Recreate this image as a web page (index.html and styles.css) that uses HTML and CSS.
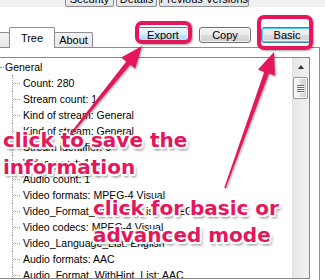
FILE: index.html
```html
<!DOCTYPE html>
<html>
<head>
<meta charset="utf-8">
<link rel="stylesheet" href="styles.css">
</head>
<body>
<div class="screen">
  <div class="parent-tabs">
    <div class="ptab ptab-security">Security</div>
    <div class="ptab ptab-details">Details</div>
    <div class="ptab ptab-prev">Previous Versions</div>
  </div>

  <div class="head">
    <div class="tabs">
      <div class="tab tab-stub"></div>
      <div class="tab tab-tree active">Tree</div>
      <div class="tab tab-about">About</div>
    </div>
    <div class="buttons">
      <button class="btn btn-hover">Export</button>
      <button class="btn">Copy</button>
      <button class="btn btn-default">Basic</button>
    </div>
  </div>

  <div class="page">
    <div class="tree">
      <div class="tree-body">
        <div class="root">General</div>
        <ul class="children">
          <li>Count: 280</li>
          <li>Stream count: 1</li>
          <li>Kind of stream: General</li>
          <li>Kind of stream: General</li>
          <li>Stream identifier: 0</li>
          <li>Video count: 1</li>
          <li>Audio count: 1</li>
          <li>Video formats: MPEG-4 Visual</li>
          <li>Video_Format_WithHint_List: MPEG-4 Visual</li>
          <li>Video codecs: MPEG-4 Visual</li>
          <li>Video_Language_List: English</li>
          <li>Audio formats: AAC</li>
          <li>Audio_Format_WithHint_List: AAC</li>
          <li>Audio codecs: AAC LC</li>
        </ul>
      </div>
      <div class="scrollbar">
        <div class="sb-up"><span class="sb-arrow"></span></div>
        <div class="sb-thumb">
          <span class="grip"></span><span class="grip"></span><span class="grip"></span><span class="grip"></span>
        </div>
      </div>
    </div>
  </div>

  <div class="hl hl-export"></div>
  <div class="hl hl-basic"></div>

  <svg class="arrows" width="325" height="280" viewBox="0 0 325 280">
    <path d="M65.4,139.5 L126.3,61.5 L121.2,57.4 L142,46 L135.2,68.8 L130.2,64.7 L66.6,140.5 Z"/>
    <path d="M224.3,187.7 L264.2,71.9 L258,69.6 L274,52 L275,75.8 L268.9,73.6 L225.8,188.3 Z"/>
  </svg>

  <div class="note note-save">click to save the<br>information</div>
  <div class="note note-mode">click for basic or<br>advanced mode</div>
</div>
</body>
</html>
```

FILE: styles.css
```css
* { box-sizing: border-box; }

body {
  margin: 0;
  background: #fff;
  font-family: "Liberation Sans", Arial, sans-serif;
  font-size: 11px;
  color: #000;
}

.screen {
  position: relative;
  width: 325px;
  height: 280px;
  overflow: hidden;
  background: #fff;
}

/* parent dialog tabs, cut off at the top */
.parent-tabs {
  height: 7px;
  background: #f0f0f0;
  display: flex;
  align-items: flex-start;
  gap: 2px;
  padding-left: 65px;
  overflow: hidden;
}
.ptab {
  margin-top: -8px;
  height: 15px;
  line-height: 13px;
  text-align: center;
  border: 1px solid #898c95;
  border-radius: 0 0 2px 2px;
  background: linear-gradient(#f2f2f2, #e4e4e4);
  white-space: nowrap;
}
.ptab-security { width: 49px; }
.ptab-details { width: 41px; }
.ptab-prev { width: 90px; }

/* tab strip + buttons */
.head {
  margin-top: 20px;
  width: 320px;
  height: 21px;
  display: flex;
  align-items: flex-start;
  border-bottom: 1px solid #898c95;
}
.tabs {
  display: flex;
  align-items: flex-end;
  height: 20px;
}
.tab {
  position: relative;
  height: 15px;
  border: 1px solid #898c95;
  border-bottom: none;
  border-radius: 2px 2px 0 0;
  background: linear-gradient(#f3f3f3, #e6e6e6);
  text-align: center;
  line-height: 14px;
  margin-left: -1px;
}
.tab-stub { width: 11px; margin-left: -1px; }
.tab-tree { width: 46px; }
.tab-about { width: 39px; }
.tab.active {
  z-index: 1;
  height: 21px;
  margin-bottom: -1px;
  background: #fff;
  line-height: 20px;
}

.buttons {
  display: flex;
  gap: 10px;
  margin-left: 44px;
}
.btn {
  width: 52px;
  height: 16px;
  padding: 0;
  font-family: "Liberation Sans", Arial, sans-serif;
  font-size: 11px;
  line-height: 14px;
  color: #000;
  border: 1px solid #707070;
  border-radius: 3px;
  background: linear-gradient(#f2f2f2 0%, #ebebeb 50%, #dddddd 50%, #cfcfcf 100%);
  box-shadow: inset 0 0 0 1px rgba(255,255,255,.7);
}
.btn-hover {
  border-color: #3c7fb1;
  background: linear-gradient(#eaf6fd 0%, #d9f0fc 50%, #bee6fd 50%, #a7d9f5 100%);
}
.btn-default {
  border-color: #3c7fb1;
  box-shadow: inset 0 0 0 1px #48d0fc, inset 0 0 0 2px rgba(255,255,255,.6);
}

/* tab page */
.page {
  width: 320px;
  height: 232px;
  padding-top: 9px;
  border-right: 1px solid #898c95;
  background: #fff;
}
.tree {
  width: 311px;
  height: 222px;
  margin-left: -1px;
  border: 1px solid #828790;
  display: flex;
  overflow: hidden;
}
.tree-body {
  flex: 1;
  padding-top: 1px;
  font-size: 10.5px;
  overflow: hidden;
  white-space: nowrap;
}
.root {
  position: relative;
  height: 16px;
  line-height: 16px;
  padding-left: 5px;
}
.root::before {
  content: "";
  position: absolute;
  left: 0;
  top: 8px;
  width: 4px;
  border-top: 1px dotted #a0a0a0;
}
.children {
  list-style: none;
  margin: 0;
  padding: 0;
}
.children li {
  position: relative;
  height: 16px;
  line-height: 16px;
  padding-left: 23px;
}
.children li::before {
  content: "";
  position: absolute;
  left: 12px;
  top: 0;
  height: 16px;
  border-left: 1px dotted #a0a0a0;
}
.children li::after {
  content: "";
  position: absolute;
  left: 13px;
  top: 8px;
  width: 7px;
  border-top: 1px dotted #a0a0a0;
}

/* scrollbar */
.scrollbar {
  width: 17px;
  flex: none;
  background: linear-gradient(90deg, #dadada 0, #e6e6e6 1px, #f2f2f2 100%);
}
.sb-up {
  height: 17px;
  display: flex;
  align-items: center;
  justify-content: center;
}
.sb-arrow {
  width: 0;
  height: 0;
  border-left: 3.5px solid transparent;
  border-right: 3.5px solid transparent;
  border-bottom: 4px solid #333;
  margin-top: 1px;
}
.sb-thumb {
  margin: 2px 1px 0 1px;
  height: 22px;
  border: 1px solid #959595;
  border-radius: 2px;
  background: linear-gradient(90deg, #f7f7f7, #ececec 45%, #dcdcdc 55%, #d2d2d2);
  box-shadow: inset 0 0 0 1px rgba(255,255,255,.8);
  display: flex;
  flex-direction: column;
  align-items: center;
  justify-content: center;
  gap: 1px;
}
.grip {
  width: 7px;
  height: 1px;
  background: #6a6a6a;
  box-shadow: 0 1px 0 #fff;
}

/* annotations */
.hl {
  position: absolute;
  border: 4px solid #e5175c;
  border-radius: 7px;
  box-shadow: 1px 1px 2px rgba(0,0,0,.35), inset 0 0 1px rgba(255,255,255,.8);
}
.hl-export { left: 135px; top: 21px; width: 57px; height: 23px; }
.hl-basic { left: 257px; top: 15px; width: 56px; height: 35px; }

.arrows {
  position: absolute;
  left: 0;
  top: 0;
  fill: #e5175c;
  filter: drop-shadow(1px 1px 1px rgba(0,0,0,.35));
}

.note {
  position: absolute;
  font-family: "DejaVu Sans", Verdana, sans-serif;
  font-weight: bold;
  font-size: 20px;
  line-height: 27px;
  color: #e5175c;
  white-space: nowrap;
  text-shadow:
    -1.5px -1.5px 0 #fff, 1.5px -1.5px 0 #fff,
    -1.5px 1.5px 0 #fff, 1.5px 1.5px 0 #fff,
    0 -2px 0 #fff, 0 2px 0 #fff, -2px 0 0 #fff, 2px 0 0 #fff,
    2px 3px 3px rgba(0,0,0,.55);
}
.note-save { left: 3px; top: 127px; }
.note-mode { left: 93px; top: 195px; }
```
